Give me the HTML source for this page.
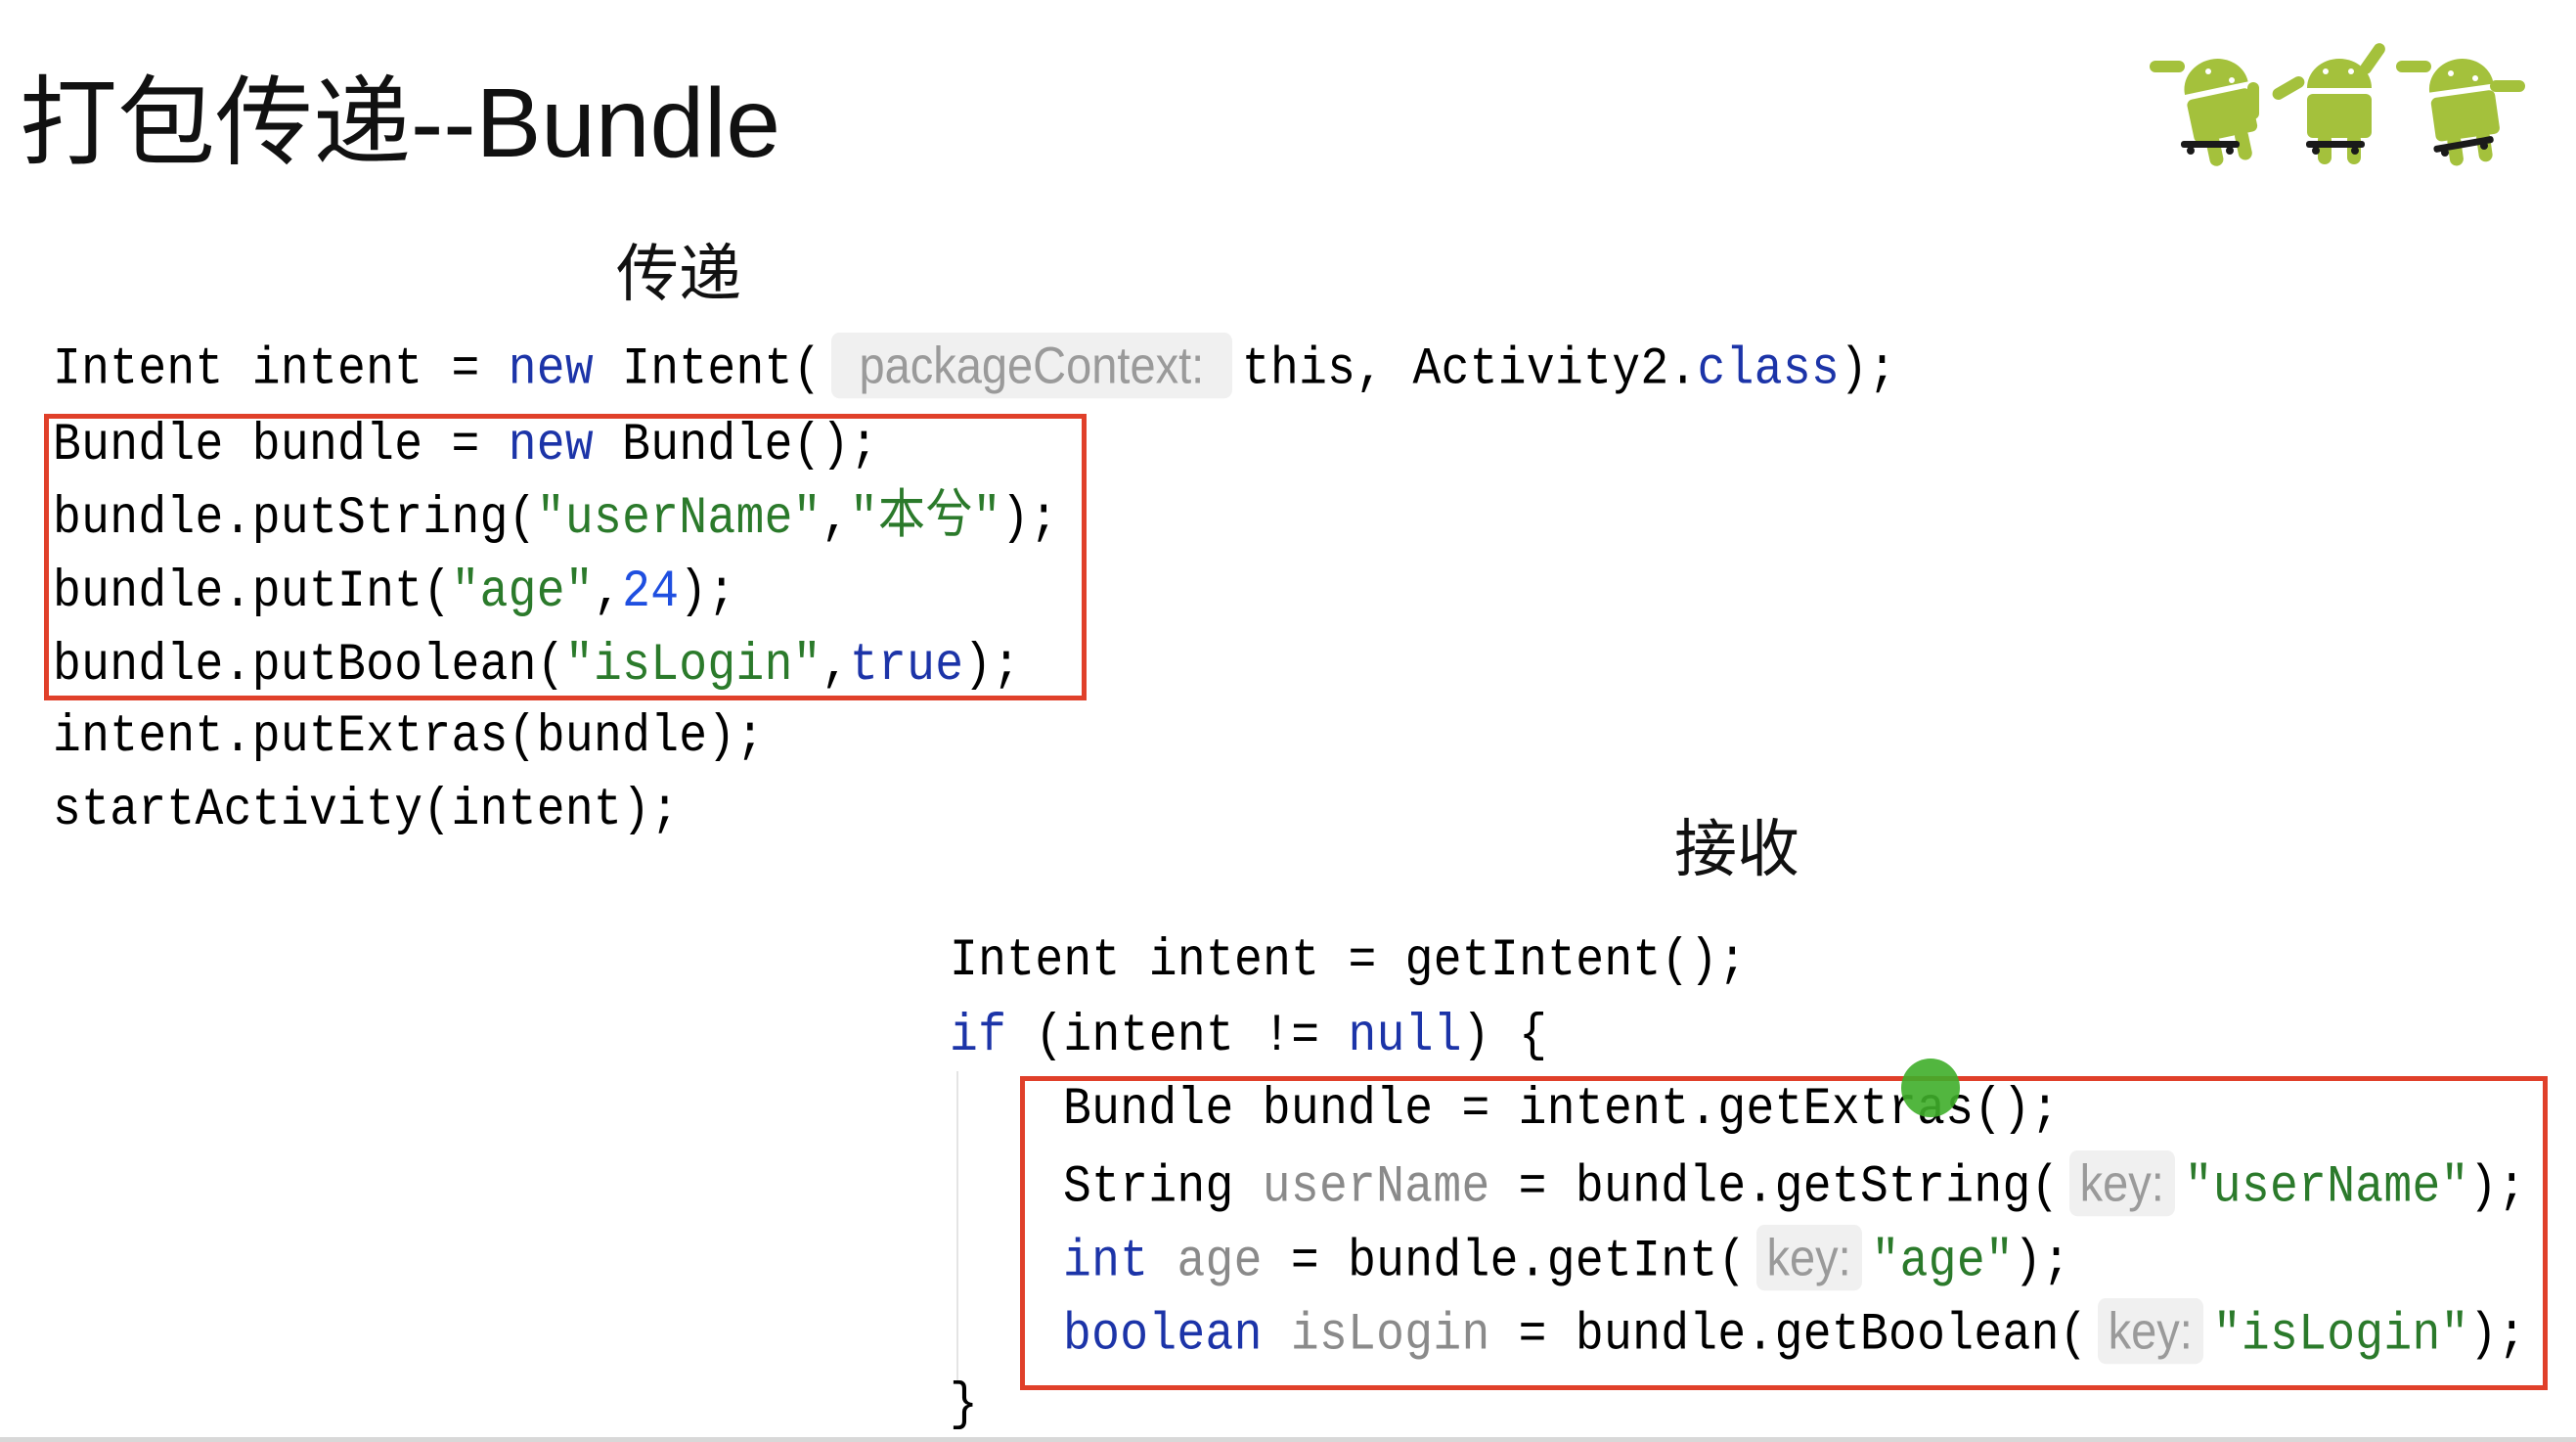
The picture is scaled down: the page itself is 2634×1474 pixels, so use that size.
<!DOCTYPE html>
<html><head><meta charset="utf-8"><style>
body{margin:0;width:2634px;height:1474px;background:#fff;position:relative;overflow:hidden;font-family:"Liberation Sans","Noto Sans CJK SC",sans-serif}
.t{position:absolute;white-space:pre;color:#111}
.c{position:absolute;white-space:pre;font-family:"Liberation Mono","Noto Sans CJK SC",monospace;font-size:48px;letter-spacing:0.3px;line-height:60px;color:#000;transform-origin:0 0;transform:scaleY(1.12)}
.k{color:#1c34a8}.s{color:#2b7a2b}.n{color:#1f4fe0}.g{color:#8a8a8a}
.h{display:inline-block;background:#f0f0f0;color:#9a9a9a;font-family:"Liberation Sans",sans-serif;font-size:47px;letter-spacing:0;border-radius:8px;text-align:center;margin:0 10px;line-height:60px}
.box{position:absolute;border:5px solid #e0402a}
</style></head><body>
<div class="t" style="left:20px;top:64px;font-size:100px;line-height:124px">打包传递--Bundle</div>
<div class="t" style="left:630px;top:240px;font-size:64px;line-height:80px">传递</div>
<div class="t" style="left:1712px;top:828px;font-size:64px;line-height:80px">接收</div>

<div class="c" style="left:54px;top:340px">Intent intent = <span class="k">new</span> Intent(<span class="h" style="width:410px">packageContext:</span>this, Activity2.<span class="k">class</span>);</div>
<div class="c" style="left:54px;top:422px">Bundle bundle = <span class="k">new</span> Bundle();</div>
<div class="c" style="left:54px;top:497px">bundle.putString(<span class="s">"userName"</span>,<span class="s">"本兮"</span>);</div>
<div class="c" style="left:54px;top:572px">bundle.putInt(<span class="s">"age"</span>,<span class="n">24</span>);</div>
<div class="c" style="left:54px;top:647px">bundle.putBoolean(<span class="s">"isLogin"</span>,<span class="k">true</span>);</div>
<div class="c" style="left:54px;top:720px">intent.putExtras(bundle);</div>
<div class="c" style="left:54px;top:795px">startActivity(intent);</div>
<div class="box" style="left:45px;top:423px;width:1056px;height:283px"></div>

<div class="c" style="left:971px;top:949px">Intent intent = getIntent();</div>
<div class="c" style="left:971px;top:1026px"><span class="k">if</span> (intent != <span class="k">null</span>) {</div>
<div style="position:absolute;left:978px;top:1095px;width:2px;height:320px;background:#e4e4e4"></div>
<div class="c" style="left:1087px;top:1101px">Bundle bundle = intent.getExtras();</div>
<div class="c" style="left:1087px;top:1176px">String <span class="g">userName</span> = bundle.getString(<span class="h" style="width:108px">key:</span><span class="s">"userName"</span>);</div>
<div class="c" style="left:1087px;top:1252px"><span class="k">int</span> <span class="g">age</span> = bundle.getInt(<span class="h" style="width:108px">key:</span><span class="s">"age"</span>);</div>
<div class="c" style="left:1087px;top:1327px"><span class="k">boolean</span> <span class="g">isLogin</span> = bundle.getBoolean(<span class="h" style="width:108px">key:</span><span class="s">"isLogin"</span>);</div>
<div class="c" style="left:971px;top:1403px">}</div>
<div class="box" style="left:1043px;top:1100px;width:1552px;height:311px"></div>
<div style="position:absolute;left:1944px;top:1082px;width:60px;height:60px;border-radius:50%;background:#3fae2a;opacity:.9"></div>
<div style="position:absolute;left:0;top:1469px;width:2634px;height:5px;background:#d8d8d8"></div>

<svg style="position:absolute;left:2150px;top:20px" width="460" height="150" viewBox="0 0 460 150">
<g fill="#a4c13c">
 <g transform="translate(118,78) rotate(-12)">
  <path d="M-33,-8 a33,30 0 0 1 66,0 z"/><rect x="-33" y="-2" width="66" height="45" rx="6"/>
  <rect x="-22" y="38" width="14" height="32" rx="7"/><rect x="8" y="38" width="14" height="32" rx="7"/>
 </g>
 <rect x="48" y="42" width="36" height="12" rx="6"/><rect x="148" y="64" width="12" height="38" rx="6"/>
 <g transform="translate(242,78)">
  <path d="M-33,-8 a33,30 0 0 1 66,0 z"/><rect x="-33" y="-2" width="66" height="45" rx="6"/>
  <rect x="-22" y="38" width="14" height="32" rx="7"/><rect x="8" y="38" width="14" height="32" rx="7"/>
 </g>
 <rect x="172" y="64" width="36" height="12" rx="6" transform="rotate(-30 190 70)"/><rect x="270" y="22" width="12" height="36" rx="6" transform="rotate(35 276 40)"/>
 <g transform="translate(368,78) rotate(-8)">
  <path d="M-33,-8 a33,30 0 0 1 66,0 z"/><rect x="-33" y="-2" width="66" height="45" rx="6"/>
  <rect x="-22" y="38" width="14" height="32" rx="7"/><rect x="8" y="38" width="14" height="32" rx="7"/>
 </g>
 <rect x="300" y="42" width="36" height="12" rx="6"/><rect x="396" y="62" width="36" height="12" rx="6"/>
</g>
<g fill="#fff"><circle cx="108" cy="53" r="3"/><circle cx="132" cy="62" r="3"/><circle cx="228" cy="53" r="3"/><circle cx="254" cy="53" r="3"/><circle cx="356" cy="55" r="3"/><circle cx="381" cy="60" r="3"/></g>
<g fill="#1a1a1a">
 <rect x="80" y="124" width="60" height="7" rx="3"/><circle cx="90" cy="134" r="4"/><circle cx="130" cy="134" r="4"/>
 <rect x="208" y="124" width="60" height="7" rx="3"/><circle cx="218" cy="134" r="4"/><circle cx="258" cy="134" r="4"/>
 <rect x="338" y="124" width="62" height="7" rx="3" transform="rotate(-10 369 127)"/><circle cx="350" cy="136" r="4"/><circle cx="390" cy="129" r="4"/>
</g>
</svg>
</body></html>
